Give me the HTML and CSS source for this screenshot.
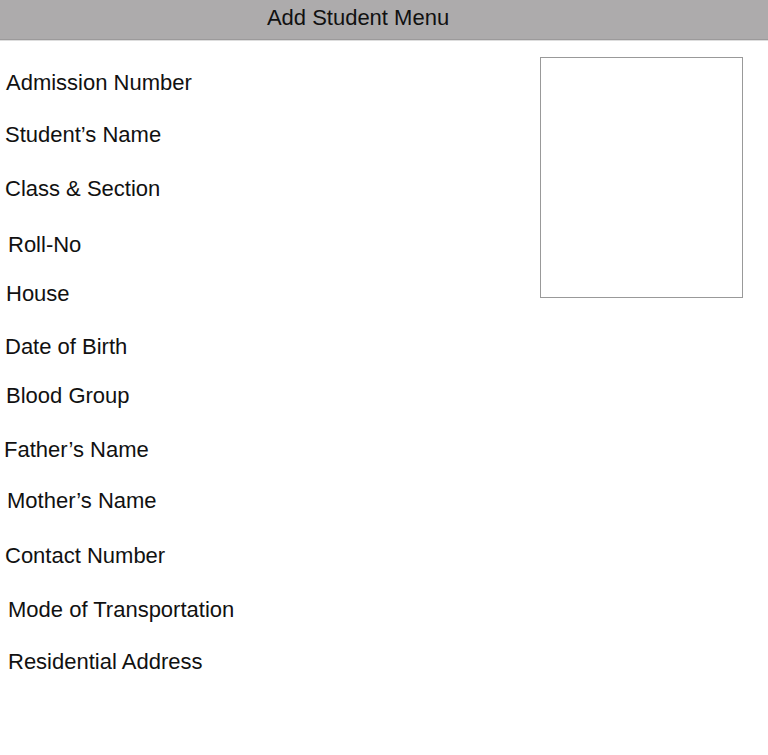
FILE: index.html
```html
<!DOCTYPE html>
<html lang="en">
<head>
<meta charset="utf-8">
<title>Add Student Menu</title>
<link rel="stylesheet" href="styles.css">
</head>
<body>
<header class="topbar"><h1 class="topbar__title">Add Student Menu</h1></header>
<main class="form">
  <ul class="form__labels">
    <li class="label label--admission">Admission Number</li>
    <li class="label label--name">Student’s Name</li>
    <li class="label label--class">Class &amp; Section</li>
    <li class="label label--roll">Roll-No</li>
    <li class="label label--house">House</li>
    <li class="label label--dob">Date of Birth</li>
    <li class="label label--blood">Blood Group</li>
    <li class="label label--father">Father’s Name</li>
    <li class="label label--mother">Mother’s Name</li>
    <li class="label label--contact">Contact Number</li>
    <li class="label label--transport">Mode of Transportation</li>
    <li class="label label--address">Residential Address</li>
  </ul>
  <div class="form__photo"></div>
</main>
</body>
</html>
```
FILE: styles.css
```css
html, body {
  margin: 0;
  padding: 0;
  background: #ffffff;
  font-family: "Liberation Sans", Arial, sans-serif;
  color: #111111;
}

.topbar {
  height: 39px;
  background: #adabac;
  border-bottom: 1px solid #9c9a9b;
  box-shadow: 0 1px 0 #dddddd;
  display: flex;
  align-items: center;
  justify-content: center;
  padding-right: 52px;
}

.topbar__title {
  margin: 0 0 3px 0;
  font-weight: normal;
  font-size: 22px;
  line-height: 24px;
  color: #111111;
}

.form {
  display: grid;
  grid-template-columns: 540px 203px;
  align-items: start;
}

.form__labels {
  list-style: none;
  margin: 0;
  padding: 17px 0 0 0;
}

.label {
  font-size: 22px;
  height: 52px;
  line-height: 52px;
  white-space: nowrap;
}

.label--admission { padding-left: 6px; }
.label--name { padding-left: 5px; height: 54px; }
.label--class { padding-left: 5px; height: 56px; }
.label--roll { padding-left: 8px; height: 49px; }
.label--house { padding-left: 6px; height: 53px; }
.label--dob { padding-left: 5px; height: 49px; }
.label--blood { padding-left: 6px; height: 54px; }
.label--father { padding-left: 4px; height: 51px; }
.label--mother { padding-left: 7px; height: 55px; }
.label--contact { padding-left: 5px; height: 54px; }
.label--transport { padding-left: 8px; height: 52px; }
.label--address { padding-left: 8px; }

.form__photo {
  margin-top: 17px;
  height: 239px;
  border: 1px solid #999999;
}
```
